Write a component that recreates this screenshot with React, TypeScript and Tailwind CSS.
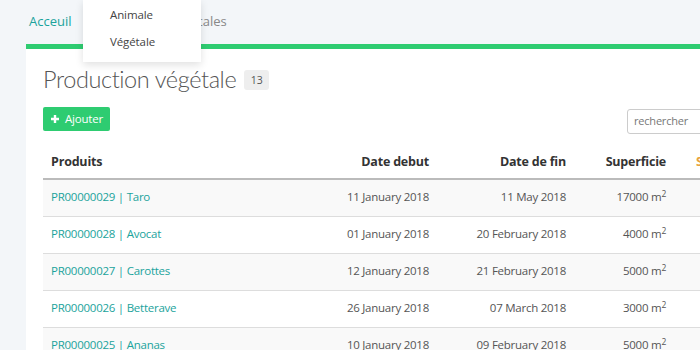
import React from "react";

const rows = [
  { code: "PR00000029", name: "Taro", start: "11 January 2018", end: "11 May 2018", area: "17000" },
  { code: "PR00000028", name: "Avocat", start: "01 January 2018", end: "20 February 2018", area: "4000" },
  { code: "PR00000027", name: "Carottes", start: "12 January 2018", end: "21 February 2018", area: "5000" },
  { code: "PR00000026", name: "Betterave", start: "26 January 2018", end: "07 March 2018", area: "3000" },
  { code: "PR00000025", name: "Ananas", start: "10 January 2018", end: "09 February 2018", area: "5000" },
];

const App: React.FC = () => {
  return (
    <div className="relative w-[700px] h-[350px] overflow-hidden bg-[#f3f6f9] font-['Open_Sans',sans-serif] text-[#555]">
      {/* Top nav */}
      <nav className="flex h-[44px] items-center pl-[29px] gap-[22px] text-[13px]">
        <span className="text-[#1ba39c]">Acceuil</span>
        <span className="text-[#888]">Productions végétales</span>
      </nav>

      {/* Dropdown menu */}
      <div className="absolute left-[83px] top-0 w-[118px] h-[62px] bg-white shadow-[0_3px_8px_rgba(0,0,0,0.12)] text-[11.5px] text-[#444] tracking-[-0.1px]">
        <div className="pl-[27px] pt-[6px] h-[28px] leading-[18px]">Animale</div>
        <div className="pl-[27px] leading-[18px] pt-[5px]">Végétale</div>
      </div>

      {/* Card */}
      <div className="ml-[26px] w-[800px] h-[306px] bg-white border-t-[5px] border-[#2ecc71] pl-[17px]">
        <div className="flex items-center gap-[8px] pt-[7px] h-[52px]">
          <h1 className="font-['Lato',sans-serif] text-[23.5px] tracking-[-0.4px] font-light text-[#555] leading-[30px]">Production végétale</h1>
          <span className="mt-[2px] bg-[#eee] rounded-[3px] text-[10.5px] text-[#555] w-[25px] text-center h-[20px] leading-[20px]">13</span>
        </div>

        <div className="flex items-start mt-[6px] w-[757px]">
          <button className="flex items-center gap-[5px] bg-[#2ecc71] text-white text-[11.5px] tracking-[-0.2px] rounded-[2px] h-[24px] px-[7px]">
            <svg width="10" height="10" viewBox="0 0 10 10">
              <path d="M5 1v8M1 5h8" stroke="white" strokeWidth="2.4" />
            </svg>
            Ajouter
          </button>
          <div className="ml-auto mt-[2px] w-[173px] h-[25px] border border-[#ccc] rounded-[3px] flex items-center pl-[6px] text-[11px] tracking-[-0.2px] text-[#777]">
            rechercher
          </div>
        </div>

        <table className="mt-[12px] w-[757px] table-fixed border-collapse text-[11.5px] tracking-[-0.25px]">
          <colgroup>
            <col className="w-[250px]" />
            <col className="w-[144px]" />
            <col className="w-[137px]" />
            <col className="w-[100px]" />
            <col />
          </colgroup>
          <thead>
            <tr className="h-[33px] border-b-2 border-[#bbb] text-[12.5px] font-semibold text-[#333] tracking-[-0.2px]">
              <th className="text-left px-[8px]">Produits</th>
              <th className="text-right px-[8px]">Date debut</th>
              <th className="text-right px-[8px]">Date de fin</th>
              <th className="text-right px-[8px]">Superficie</th>
              <th className="text-left pl-[22px] text-[#e8a33d]">Statut</th>
            </tr>
          </thead>
          <tbody>
            {rows.map((r, i) => (
              <tr key={r.code} className={`h-[37px] border-t border-[#ddd] ${i % 2 === 0 ? "bg-[#f9f9f9]" : "bg-white"}`}>
                <td className="px-[8px] pb-[2px] text-[#1ba39c]">
                  {r.code} | {r.name}
                </td>
                <td className="px-[8px] pb-[2px] text-right">{r.start}</td>
                <td className="px-[8px] pb-[2px] text-right">{r.end}</td>
                <td className="px-[8px] pb-[2px] text-right">
                  {r.area} m<sup className="text-[8.5px]">2</sup>
                </td>
                <td></td>
              </tr>
            ))}
          </tbody>
        </table>
      </div>
    </div>
  );
};

export default App;
